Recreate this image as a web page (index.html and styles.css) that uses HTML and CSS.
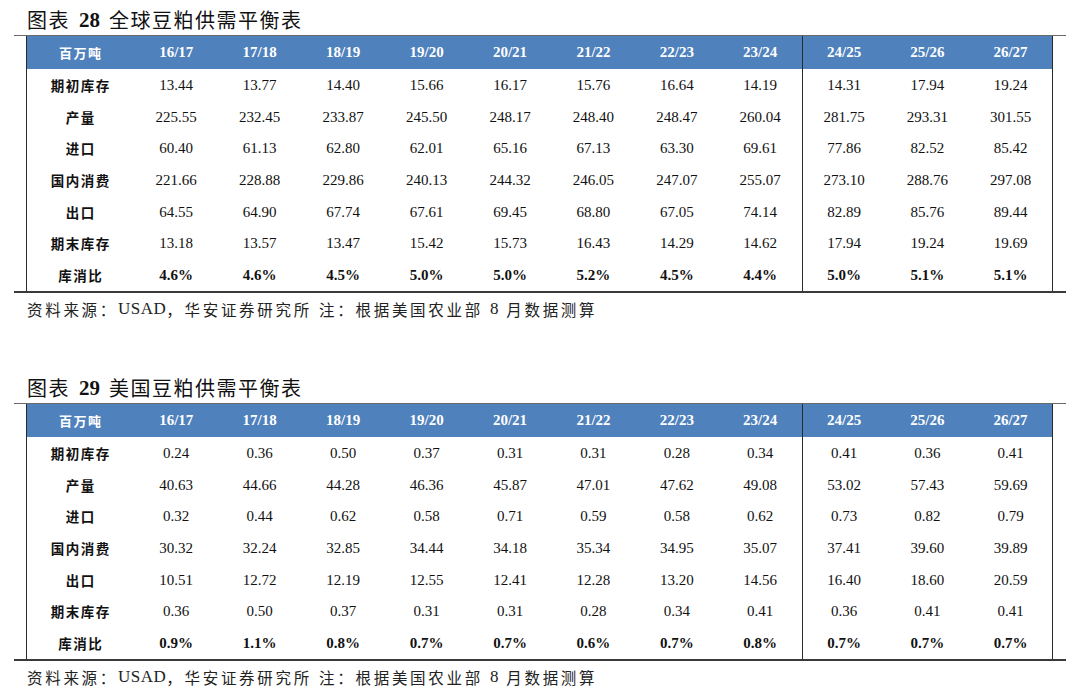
FILE: index.html
```html
<!DOCTYPE html>
<html lang="zh-CN">
<head>
<meta charset="utf-8">
<title>豆粕供需平衡表</title>
<link rel="stylesheet" href="styles.css">
</head>
<body>
<section class="block">
  <h2 class="title"><span class="cjk">图表</span><b class="num">28</b><span class="cjk">全球豆粕供需平衡表</span></h2>
  <div class="rule-top"></div>
  <table class="grid">
    <colgroup><col class="c0"><col span="11" class="cn"></colgroup>
    <thead>
      <tr><th class="lab">百万吨</th><th>16/17</th><th>17/18</th><th>18/19</th><th>19/20</th><th>20/21</th><th>21/22</th><th>22/23</th><th>23/24</th><th class="split">24/25</th><th>25/26</th><th>26/27</th></tr>
    </thead>
    <tbody>
      <tr><td class="lab">期初库存</td><td>13.44</td><td>13.77</td><td>14.40</td><td>15.66</td><td>16.17</td><td>15.76</td><td>16.64</td><td>14.19</td><td class="split">14.31</td><td>17.94</td><td>19.24</td></tr>
      <tr><td class="lab">产量</td><td>225.55</td><td>232.45</td><td>233.87</td><td>245.50</td><td>248.17</td><td>248.40</td><td>248.47</td><td>260.04</td><td class="split">281.75</td><td>293.31</td><td>301.55</td></tr>
      <tr><td class="lab">进口</td><td>60.40</td><td>61.13</td><td>62.80</td><td>62.01</td><td>65.16</td><td>67.13</td><td>63.30</td><td>69.61</td><td class="split">77.86</td><td>82.52</td><td>85.42</td></tr>
      <tr><td class="lab">国内消费</td><td>221.66</td><td>228.88</td><td>229.86</td><td>240.13</td><td>244.32</td><td>246.05</td><td>247.07</td><td>255.07</td><td class="split">273.10</td><td>288.76</td><td>297.08</td></tr>
      <tr><td class="lab">出口</td><td>64.55</td><td>64.90</td><td>67.74</td><td>67.61</td><td>69.45</td><td>68.80</td><td>67.05</td><td>74.14</td><td class="split">82.89</td><td>85.76</td><td>89.44</td></tr>
      <tr><td class="lab">期末库存</td><td>13.18</td><td>13.57</td><td>13.47</td><td>15.42</td><td>15.73</td><td>16.43</td><td>14.29</td><td>14.62</td><td class="split">17.94</td><td>19.24</td><td>19.69</td></tr>
      <tr class="pct"><td class="lab">库消比</td><td>4.6%</td><td>4.6%</td><td>4.5%</td><td>5.0%</td><td>5.0%</td><td>5.2%</td><td>4.5%</td><td>4.4%</td><td class="split">5.0%</td><td>5.1%</td><td>5.1%</td></tr>
    </tbody>
  </table>
  <div class="rule-bottom"></div>
  <p class="note">资料来源：<span class="lat">USAD</span>，华安证券研究所 注：根据美国农业部 <span class="lat">8</span> 月数据测算</p>
</section>
<section class="block">
  <h2 class="title"><span class="cjk">图表</span><b class="num">29</b><span class="cjk">美国豆粕供需平衡表</span></h2>
  <div class="rule-top"></div>
  <table class="grid">
    <colgroup><col class="c0"><col span="11" class="cn"></colgroup>
    <thead>
      <tr><th class="lab">百万吨</th><th>16/17</th><th>17/18</th><th>18/19</th><th>19/20</th><th>20/21</th><th>21/22</th><th>22/23</th><th>23/24</th><th class="split">24/25</th><th>25/26</th><th>26/27</th></tr>
    </thead>
    <tbody>
      <tr><td class="lab">期初库存</td><td>0.24</td><td>0.36</td><td>0.50</td><td>0.37</td><td>0.31</td><td>0.31</td><td>0.28</td><td>0.34</td><td class="split">0.41</td><td>0.36</td><td>0.41</td></tr>
      <tr><td class="lab">产量</td><td>40.63</td><td>44.66</td><td>44.28</td><td>46.36</td><td>45.87</td><td>47.01</td><td>47.62</td><td>49.08</td><td class="split">53.02</td><td>57.43</td><td>59.69</td></tr>
      <tr><td class="lab">进口</td><td>0.32</td><td>0.44</td><td>0.62</td><td>0.58</td><td>0.71</td><td>0.59</td><td>0.58</td><td>0.62</td><td class="split">0.73</td><td>0.82</td><td>0.79</td></tr>
      <tr><td class="lab">国内消费</td><td>30.32</td><td>32.24</td><td>32.85</td><td>34.44</td><td>34.18</td><td>35.34</td><td>34.95</td><td>35.07</td><td class="split">37.41</td><td>39.60</td><td>39.89</td></tr>
      <tr><td class="lab">出口</td><td>10.51</td><td>12.72</td><td>12.19</td><td>12.55</td><td>12.41</td><td>12.28</td><td>13.20</td><td>14.56</td><td class="split">16.40</td><td>18.60</td><td>20.59</td></tr>
      <tr><td class="lab">期末库存</td><td>0.36</td><td>0.50</td><td>0.37</td><td>0.31</td><td>0.31</td><td>0.28</td><td>0.34</td><td>0.41</td><td class="split">0.36</td><td>0.41</td><td>0.41</td></tr>
      <tr class="pct"><td class="lab">库消比</td><td>0.9%</td><td>1.1%</td><td>0.8%</td><td>0.7%</td><td>0.7%</td><td>0.6%</td><td>0.7%</td><td>0.8%</td><td class="split">0.7%</td><td>0.7%</td><td>0.7%</td></tr>
    </tbody>
  </table>
  <div class="rule-bottom"></div>
  <p class="note">资料来源：<span class="lat">USAD</span>，华安证券研究所 注：根据美国农业部 <span class="lat">8</span> 月数据测算</p>
</section>
</body>
</html>
```

FILE: styles.css
```css
* { box-sizing: border-box; }
html, body { margin: 0; padding: 0; background: #fff; }
body {
  width: 1080px;
  height: 695px;
  overflow: hidden;
  color: #111;
  font-family: "Liberation Serif", "Noto Sans CJK SC", serif;
}
.block {
  height: 368px;
  display: flex;
  flex-direction: column;
}
.block:last-child { height: auto; }
.title {
  margin: 0;
  height: 35px;
  padding: 5px 0 0 27px;
  display: flex;
  align-items: center;
  gap: 7px;
  font-size: 20px;
  font-weight: 400;
  line-height: 1;
  color: #111;
}
.title .cjk {
  font-family: "Noto Sans CJK SC", sans-serif;
  font-weight: 400;
  letter-spacing: 1.5px;
}
.title .num {
  font-family: "Liberation Serif", serif;
  font-weight: 700;
  font-size: 21px;
  padding: 0 2px;
}
.rule-top {
  margin-left: 14px;
  width: 1052px;
  height: 1px;
  background: #6a6a6a;
}
.rule-bottom {
  margin-left: 14px;
  width: 1052px;
  height: 2px;
  background: #3a3a3a;
}
.grid {
  margin-left: 26px;
  width: 1027px;
  table-layout: fixed;
  border-collapse: collapse;
  border-spacing: 0;
  border-left: 1px solid #2a2a2a;
  border-right: 1px solid #2a2a2a;
}
.c0 { width: 108px; }
.grid th, .grid td {
  padding: 0;
  text-align: center;
  white-space: nowrap;
}
.grid thead tr { height: 33px; }
.grid th {
  background: #4f81bd;
  color: #fff;
  font-weight: 700;
  font-size: 15px;
}
.grid th.lab {
  font-family: "Noto Sans CJK SC", sans-serif;
  font-size: 13px;
  font-weight: 700;
  letter-spacing: 1.5px;
}
.grid tbody tr { height: 31.7px; }
.grid td {
  font-size: 15px;
  color: #111;
  padding-top: 1px;
}
.grid td.lab {
  font-family: "Noto Sans CJK SC", sans-serif;
  font-size: 13.5px;
  font-weight: 700;
  letter-spacing: 1.5px;
  padding-top: 0;
}
.grid .split { border-left: 1px solid #2a2a2a; }
.grid tr.pct td { font-weight: 700; }
.note {
  margin: 0;
  height: 32px;
  padding-left: 27px;
  display: flex;
  align-items: center;
  font-family: "Noto Sans CJK SC", sans-serif;
  font-size: 15.5px;
  letter-spacing: 2.7px;
  word-spacing: 1px;
  color: #222;
  white-space: pre;
}
.note .lat {
  font-family: "Liberation Serif", serif;
  font-size: 17px;
  letter-spacing: 0.5px;
}
```
